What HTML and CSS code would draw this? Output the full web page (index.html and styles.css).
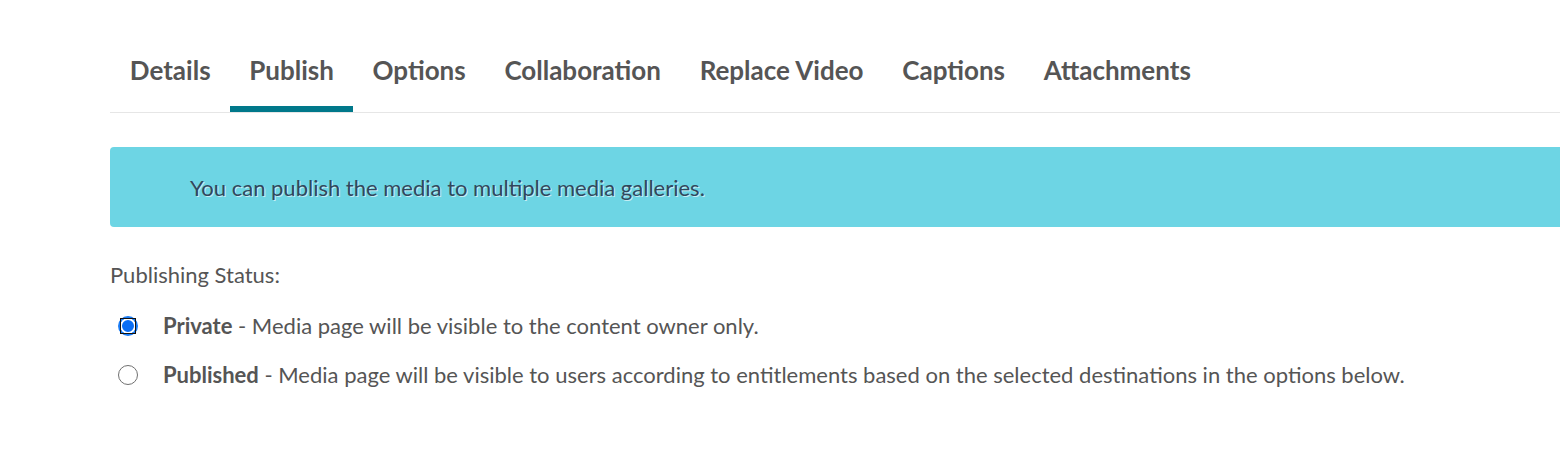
FILE: index.html
```html
<!DOCTYPE html>
<html>
<head>
<meta charset="utf-8">
<link rel="stylesheet" href="styles.css">
</head>
<body>
<div class="page">
  <nav class="tabs">
    <a class="tab">Details</a>
    <a class="tab active">Publish</a>
    <a class="tab">Options</a>
    <a class="tab">Collaboration</a>
    <a class="tab">Replace Video</a>
    <a class="tab">Captions</a>
    <a class="tab">Attachments</a>
  </nav>
  <div class="alert">You can publish the media to multiple media galleries.</div>
  <div class="status-label">Publishing Status:</div>
  <div class="options">
    <label class="option">
      <span class="radio checked"><span class="focus"></span></span>
      <span class="text"><b>Private</b> - Media page will be visible to the content owner only.</span>
    </label>
    <label class="option">
      <span class="radio"></span>
      <span class="text"><b>Published</b> - Media page will be visible to users according to entitlements based on the selected destinations in the options below.</span>
    </label>
  </div>
</div>
</body>
</html>
```
FILE: styles.css
```css
html, body {
  margin: 0;
  padding: 0;
  background: #ffffff;
  overflow: hidden;
}
body {
  font-family: Lato, "Open Sans", sans-serif;
  color: #555555;
}
.page {
  padding-left: 110px;
  margin-right: -20px;
  padding-top: 48px;
}
.tabs {
  display: flex;
  border-bottom: 1px solid #e6e6e6;
  height: 65px;
  box-sizing: border-box;
  padding-left: 0.5px;
}
.tab {
  display: block;
  padding: 0 19.35px;
  font-size: 26px;
  font-weight: 700;
  line-height: 44px;
  color: #555555;
  height: 64px;
  box-sizing: border-box;
  cursor: pointer;
}
.tab.active {
  border-bottom: 6px solid #00788a;
}
.alert {
  margin-top: 34px;
  height: 80px;
  background: #6dd5e4;
  border-radius: 4px;
  padding-left: 80px;
  display: flex;
  align-items: center;
  font-size: 22px;
  color: #31475c;
  text-shadow: 1px 1px 0 rgba(255, 255, 255, 0.6);
}
.status-label {
  margin-top: 36px;
  font-size: 22px;
  line-height: 24px;
  color: #555555;
}
.options {
  margin-top: 27px;
  display: flex;
  flex-direction: column;
  gap: 25px;
}
.option {
  display: flex;
  align-items: center;
  height: 24px;
  font-size: 22px;
  line-height: 24px;
  color: #555555;
}
.option b {
  font-weight: 700;
}
.radio {
  position: relative;
  width: 20px;
  height: 20px;
  margin-left: 8px;
  margin-right: 25px;
  border: 1.5px solid #707070;
  border-radius: 50%;
  box-sizing: border-box;
  flex: none;
  background: #fff;
}
.radio.checked {
  border: 2px solid #1a7cf5;
  background: #0a6ef5;
  box-shadow: inset 0 0 0 2px #fff;
}
.focus {
  position: absolute;
  left: 0px;
  top: 0px;
  width: 16px;
  height: 16px;
  border: 1px solid #111;
  box-sizing: border-box;
}
```
